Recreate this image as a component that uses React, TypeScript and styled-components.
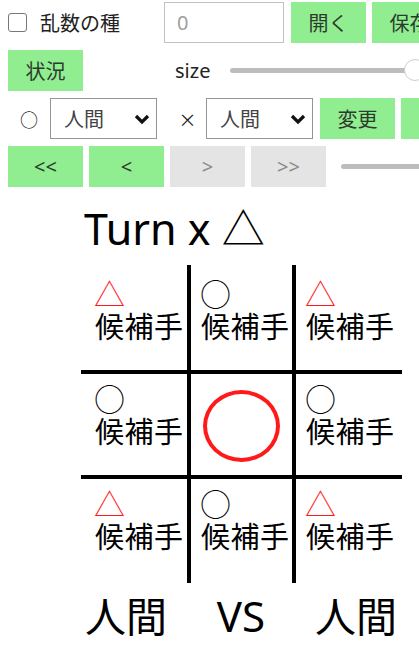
import styled, { createGlobalStyle } from 'styled-components';

type Mark = 'o' | 't';

interface CellData {
  mark: Mark;
  placed?: boolean;
}

const board: CellData[][] = [
  [{ mark: 't' }, { mark: 'o' }, { mark: 't' }],
  [{ mark: 'o' }, { mark: 'o', placed: true }, { mark: 'o' }],
  [{ mark: 't' }, { mark: 'o' }, { mark: 't' }],
];

const GlobalStyle = createGlobalStyle`
  body {
    margin: 0;
    background: #fff;
    overflow: hidden;
    font-family: 'Noto Sans', 'Noto Sans CJK JP', sans-serif;
  }
`;

const Chevron = () => (
  <svg width='16' height='11' viewBox='0 0 16 11'>
    <polyline points='2,2 8,8 14,2' fill='none' stroke='#111' strokeWidth='3.2' strokeLinejoin='miter' />
  </svg>
);

const App = () => {
  return (
    <Sty.Page>
      <GlobalStyle />
      <Sty.Row>
        <Sty.Check type='checkbox' />
        <Sty.Label $width={124} $left={13}>乱数の種</Sty.Label>
        <Sty.Input type='text' placeholder='0' />
        <Sty.Button $left={7}>開く</Sty.Button>
        <Sty.Button $left={6}>保存</Sty.Button>
      </Sty.Row>
      <Sty.Row>
        <Sty.Button>状況</Sty.Button>
        <Sty.Label $width={55} $left={92}>size</Sty.Label>
        <Sty.Range type='range' min={1} max={10} defaultValue={10} $width={196} />
      </Sty.Row>
      <Sty.Row>
        <Sty.Symbol $width={42}>○</Sty.Symbol>
        <Sty.SelectWrap>
          <Sty.Select defaultValue='human'>
            <option value='human'>人間</option>
          </Sty.Select>
          <Sty.Arrow>
            <Chevron />
          </Sty.Arrow>
        </Sty.SelectWrap>
        <Sty.Symbol $width={49} $pad={12}>×</Sty.Symbol>
        <Sty.SelectWrap>
          <Sty.Select defaultValue='human'>
            <option value='human'>人間</option>
          </Sty.Select>
          <Sty.Arrow>
            <Chevron />
          </Sty.Arrow>
        </Sty.SelectWrap>
        <Sty.Button $left={7}>変更</Sty.Button>
        <Sty.Button $left={6}>中断</Sty.Button>
      </Sty.Row>
      <Sty.Row $last>
        <Sty.Button>{'<<'}</Sty.Button>
        <Sty.Button $left={6}>{'<'}</Sty.Button>
        <Sty.Button $left={6} $off>{'>'}</Sty.Button>
        <Sty.Button $left={6} $off>{'>>'}</Sty.Button>
        <Sty.Range type='range' min={0} max={10} defaultValue={10} $width={120} $left={15} />
      </Sty.Row>

      <Sty.Title>Turn x △</Sty.Title>

      <Sty.Board>
        {board.map((row, r) =>
          row.map((cell, c) => (
            <Sty.Cell key={`${r}-${c}`} $row={r} $col={c} $center={!!cell.placed}>
              {cell.placed ? (
                <Sty.Ring />
              ) : (
                <>
                  <Sty.Mark $red={cell.mark === 't'}>{cell.mark === 't' ? '△' : '○'}</Sty.Mark>
                  <Sty.Hint>候補手</Sty.Hint>
                </>
              )}
            </Sty.Cell>
          ))
        )}
      </Sty.Board>

      <Sty.Footer>
        <span>人間</span>
        <Sty.Vs>VS</Sty.Vs>
        <span>人間</span>
      </Sty.Footer>
    </Sty.Page>
  );
};

const Sty = {
  Page: styled.div`
    padding: 2px 0 0 8px;
    width: 419px;
    box-sizing: border-box;
    overflow: hidden;
  `,
  Row: styled.div<{ $last?: boolean }>`
    display: flex;
    align-items: center;
    height: 41px;
    margin-bottom: ${({ $last }) => ($last ? 0 : 7)}px;
    white-space: nowrap;
  `,
  Check: styled.input`
    appearance: none;
    flex: none;
    margin: 0;
    width: 19px;
    height: 19px;
    box-sizing: border-box;
    border: 1.5px solid #767676;
    border-radius: 3px;
    background: #fff;
  `,
  Label: styled.span<{ $width: number; $left?: number }>`
    flex: none;
    width: ${({ $width }) => $width}px;
    margin-left: ${({ $left }) => $left ?? 0}px;
    font-family: 'Noto Sans', 'Noto Sans CJK JP', sans-serif;
    font-size: 20px;
    color: #222;
  `,
  Symbol: styled.span<{ $width: number; $pad?: number }>`
    flex: none;
    width: ${({ $width }) => $width}px;
    padding-left: ${({ $pad }) => $pad ?? 0}px;
    box-sizing: border-box;
    text-align: center;
    font-family: 'Noto Sans CJK JP', sans-serif;
    font-size: 18px;
    color: #222;
  `,
  Input: styled.input`
    flex: none;
    width: 120px;
    height: 41px;
    box-sizing: border-box;
    margin: 0;
    padding: 0 12px;
    border: 1px solid #c2c2c2;
    font-family: 'Noto Sans', sans-serif;
    font-size: 20px;
    outline: none;

    &::placeholder {
      color: #a0a0a0;
    }
  `,
  Button: styled.button<{ $left?: number; $off?: boolean }>`
    flex: none;
    width: 75px;
    height: 41px;
    margin: 0 0 0 ${({ $left }) => $left ?? 0}px;
    padding: 0;
    border: none;
    background: ${({ $off }) => ($off ? '#e4e4e4' : '#90ee90')};
    color: ${({ $off }) => ($off ? '#8a8a8a' : '#2d3a2d')};
    font-family: 'Noto Sans', 'Noto Sans CJK JP', sans-serif;
    font-size: 20px;
  `,
  Range: styled.input<{ $width: number; $left?: number }>`
    appearance: none;
    flex: none;
    width: ${({ $width }) => $width}px;
    height: 24px;
    margin: 0 0 0 ${({ $left }) => $left ?? 0}px;
    background: transparent;

    &::-webkit-slider-runnable-track {
      height: 5px;
      border-radius: 3px;
      background: #bdbdbd;
    }

    &::-webkit-slider-thumb {
      appearance: none;
      width: 22px;
      height: 22px;
      margin-top: -9px;
      border-radius: 50%;
      border: 1px solid #cfcfcf;
      background: #fff;
      box-sizing: border-box;
    }
  `,
  SelectWrap: styled.div`
    position: relative;
    flex: none;
    width: 107px;
    height: 41px;
  `,
  Select: styled.select`
    appearance: none;
    width: 100%;
    height: 100%;
    margin: 0;
    padding: 0 0 0 13px;
    box-sizing: border-box;
    border: 1px solid #959595;
    border-radius: 0;
    background: #fff;
    color: #444;
    font-family: 'Noto Sans CJK JP', sans-serif;
    font-size: 20px;
  `,
  Arrow: styled.span`
    position: absolute;
    left: 84px;
    top: 16px;
    pointer-events: none;
    line-height: 0;
  `,
  Title: styled.div`
    margin: 16px 0 10px 76px;
    font-size: 43px;
    line-height: 52px;
    color: #000;
  `,
  Board: styled.div`
    display: grid;
    grid-template-columns: 110px 105px 106px;
    grid-template-rows: 109px 105px 104px;
    width: 321px;
    margin-left: 73px;
  `,
  Cell: styled.div<{ $row: number; $col: number; $center: boolean }>`
    display: flex;
    flex-direction: column;
    align-items: ${({ $center }) => ($center ? 'center' : 'flex-start')};
    justify-content: ${({ $center }) => ($center ? 'center' : 'flex-start')};
    box-sizing: border-box;
    border-right: ${({ $col }) => ($col < 2 ? '4px solid #000' : 'none')};
    border-bottom: ${({ $row }) => ($row < 2 ? '4px solid #000' : 'none')};
    padding-left: ${({ $col, $center }) => ($center ? 0 : $col === 0 ? 14 : 10)}px;
    padding-top: ${({ $row, $center }) => ($center ? 2 : $row === 0 ? 12 : 8)}px;
  `,
  Mark: styled.div<{ $red: boolean }>`
    font-family: 'Noto Sans CJK JP', sans-serif;
    font-size: 31px;
    font-weight: 300;
    line-height: 32px;
    margin-left: -1px;
    color: ${({ $red }) => ($red ? '#ff1a1a' : '#000')};
  `,
  Hint: styled.div`
    font-family: 'Noto Sans CJK JP', sans-serif;
    font-size: 29px;
    line-height: 32px;
    letter-spacing: 0.5px;
    color: #000;
  `,
  Ring: styled.div`
    width: 77px;
    height: 72px;
    box-sizing: border-box;
    border: 4px solid #ff1a1a;
    border-radius: 50%;
  `,
  Footer: styled.div`
    display: flex;
    justify-content: space-between;
    width: 312px;
    margin: 9px 0 0 77px;
    font-family: 'Noto Sans', 'Noto Sans CJK JP', sans-serif;
    font-size: 41px;
    line-height: 48px;
    color: #000;
  `,
  Vs: styled.span`
    font-size: 42px;
  `,
};

export default App;
